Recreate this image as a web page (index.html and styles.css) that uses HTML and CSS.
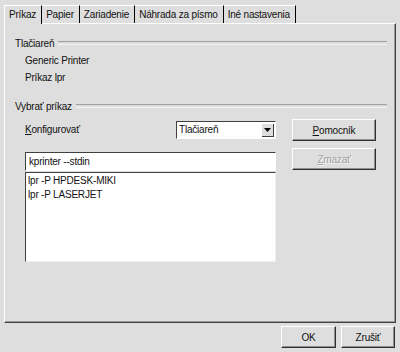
FILE: index.html
```html
<!DOCTYPE html>
<html lang="sk">
<head>
    <meta charset="UTF-8">
    <title>Nastavenia tlače</title>
    <link rel="stylesheet" href="styles.css">
</head>
<body>
    <div class="dialog">
        <div class="tabs">
            <div class="tab active">Príkaz</div>
            <div class="tab">Papier</div>
            <div class="tab">Zariadenie</div>
            <div class="tab">Náhrada za písmo</div>
            <div class="tab">Iné nastavenia</div>
        </div>

        <div class="panel">
            <div class="group-title first"><span>Tlačiareň</span></div>
            <div class="info-row">Generic Printer</div>
            <div class="info-row">Príkaz lpr</div>

            <div class="group-title second"><span>Vybrať príkaz</span></div>
            <div class="command-area">
                <div class="command-left">
                    <div class="config-row">
                        <span><u>K</u>onfigurovať</span>
                        <div class="combo">
                            <span class="combo-text">Tlačiareň</span>
                            <span class="combo-arrow">
                                <svg width="7" height="4" viewBox="0 0 7 4"><path d="M0 0h7L3.5 4z" fill="#000"/></svg>
                            </span>
                        </div>
                    </div>
                    <div class="text-input">kprinter --stdin</div>
                    <ul class="command-list">
                        <li>lpr -P HPDESK-MIKI</li>
                        <li>lpr -P LASERJET</li>
                    </ul>
                </div>
                <div class="command-right">
                    <button class="btn"><u>P</u>omocník</button>
                    <button class="btn disabled"><u>Z</u>mazať</button>
                </div>
            </div>
        </div>

        <div class="footer">
            <button class="btn btn-ok">OK</button>
            <button class="btn btn-cancel">Zrušiť</button>
        </div>
    </div>
</body>
</html>
```

FILE: styles.css
```css
* {
    margin: 0;
    padding: 0;
    box-sizing: border-box;
}

body {
    font-family: "Liberation Sans", Arial, sans-serif;
    font-size: 10px;
    letter-spacing: -0.2px;
    color: #111;
    background: #dedede;
}

.dialog {
    width: 400px;
    height: 352px;
    display: flex;
    flex-direction: column;
}

/* tab bar */
.tabs {
    display: flex;
    padding: 5px 0 0 4px;
    height: 23px;
    position: relative;
    z-index: 1;
}

.tab {
    height: 18px;
    line-height: 18px;
    padding: 0 5px 0 4px;
    border-top: 1px solid #fff;
    border-right: 1px solid #000;
    background: #dedede;
}

.tab.active {
    border-left: 1px solid #fff;
    height: 19px;
}

.panel {
    margin: 0 4px 0 4px;
    height: 300px;
    border-top: 1px solid #fff;
    border-left: 1px solid #fff;
    border-right: 1px solid #404040;
    border-bottom: 1px solid #404040;
    box-shadow: inset -1px -1px #9a9a9a;
    padding: 12px 8px 0 10px;
}

/* group headings with etched line */
.group-title {
    display: flex;
    align-items: center;
    height: 14px;
}

.group-title::after {
    content: "";
    flex: 1;
    height: 2px;
    margin-left: 4px;
    border-top: 1px solid #a0a0a0;
    border-bottom: 1px solid #f4f4f4;
}

.group-title.second {
    margin-top: 13px;
}

.info-row {
    padding-left: 10px;
    height: 17px;
    line-height: 17px;
}

.group-title.first + .info-row {
    margin-top: 2px;
}

/* command section */
.command-area {
    display: flex;
    gap: 16px;
    padding-left: 10px;
    margin-top: 6px;
}

.command-left {
    width: 251px;
    display: flex;
    flex-direction: column;
}

.config-row {
    display: flex;
    align-items: center;
    justify-content: space-between;
    height: 21px;
}

.combo {
    width: 100px;
    height: 18px;
    background: #fff;
    border-top: 1px solid #404040;
    border-left: 1px solid #404040;
    border-right: 1px solid #fff;
    border-bottom: 1px solid #fff;
    display: flex;
    align-items: center;
}

.combo-text {
    flex: 1;
    padding-left: 2px;
}

.combo-arrow {
    width: 13px;
    height: 14px;
    margin-right: 1px;
    background: #dedede;
    box-shadow: inset 1px 1px #fff, inset -1px -1px #404040;
    display: flex;
    align-items: center;
    justify-content: center;
}

.text-input {
    margin-top: 12px;
    height: 19px;
    line-height: 17px;
    padding-left: 3px;
    background: #fff;
    border-top: 1px solid #404040;
    border-left: 1px solid #404040;
    border-bottom: 1px solid #fff;
    border-right: 1px solid #fff;
}

.command-list {
    list-style: none;
    margin-top: 1px;
    height: 90px;
    background: #fff;
    border-top: 1px solid #404040;
    border-left: 1px solid #404040;
    border-bottom: 1px solid #f0f0f0;
    border-right: 1px solid #f0f0f0;
    padding: 1px 0 0 2px;
}

.command-list li {
    height: 14px;
    line-height: 14px;
}

.command-right {
    width: 84px;
    display: flex;
    flex-direction: column;
    gap: 7px;
}

/* raised buttons */
.btn {
    font-family: inherit;
    font-size: 10px;
    letter-spacing: -0.2px;
    color: #111;
    height: 22px;
    background: #dedede;
    border: none;
    border-right: 1px solid #303030;
    border-bottom: 1px solid #303030;
    border-top: 1px solid #fff;
    border-left: 1px solid #fff;
    box-shadow: inset -1px -1px #909090;
}

.btn.disabled {
    color: #a4a4a4;
    text-shadow: 1px 1px #f4f4f4;
}

.footer {
    display: flex;
    justify-content: flex-end;
    gap: 5px;
    padding: 3px 5px 0 0;
}

.btn-ok {
    width: 55px;
}

.btn-cancel {
    width: 54px;
}
```
